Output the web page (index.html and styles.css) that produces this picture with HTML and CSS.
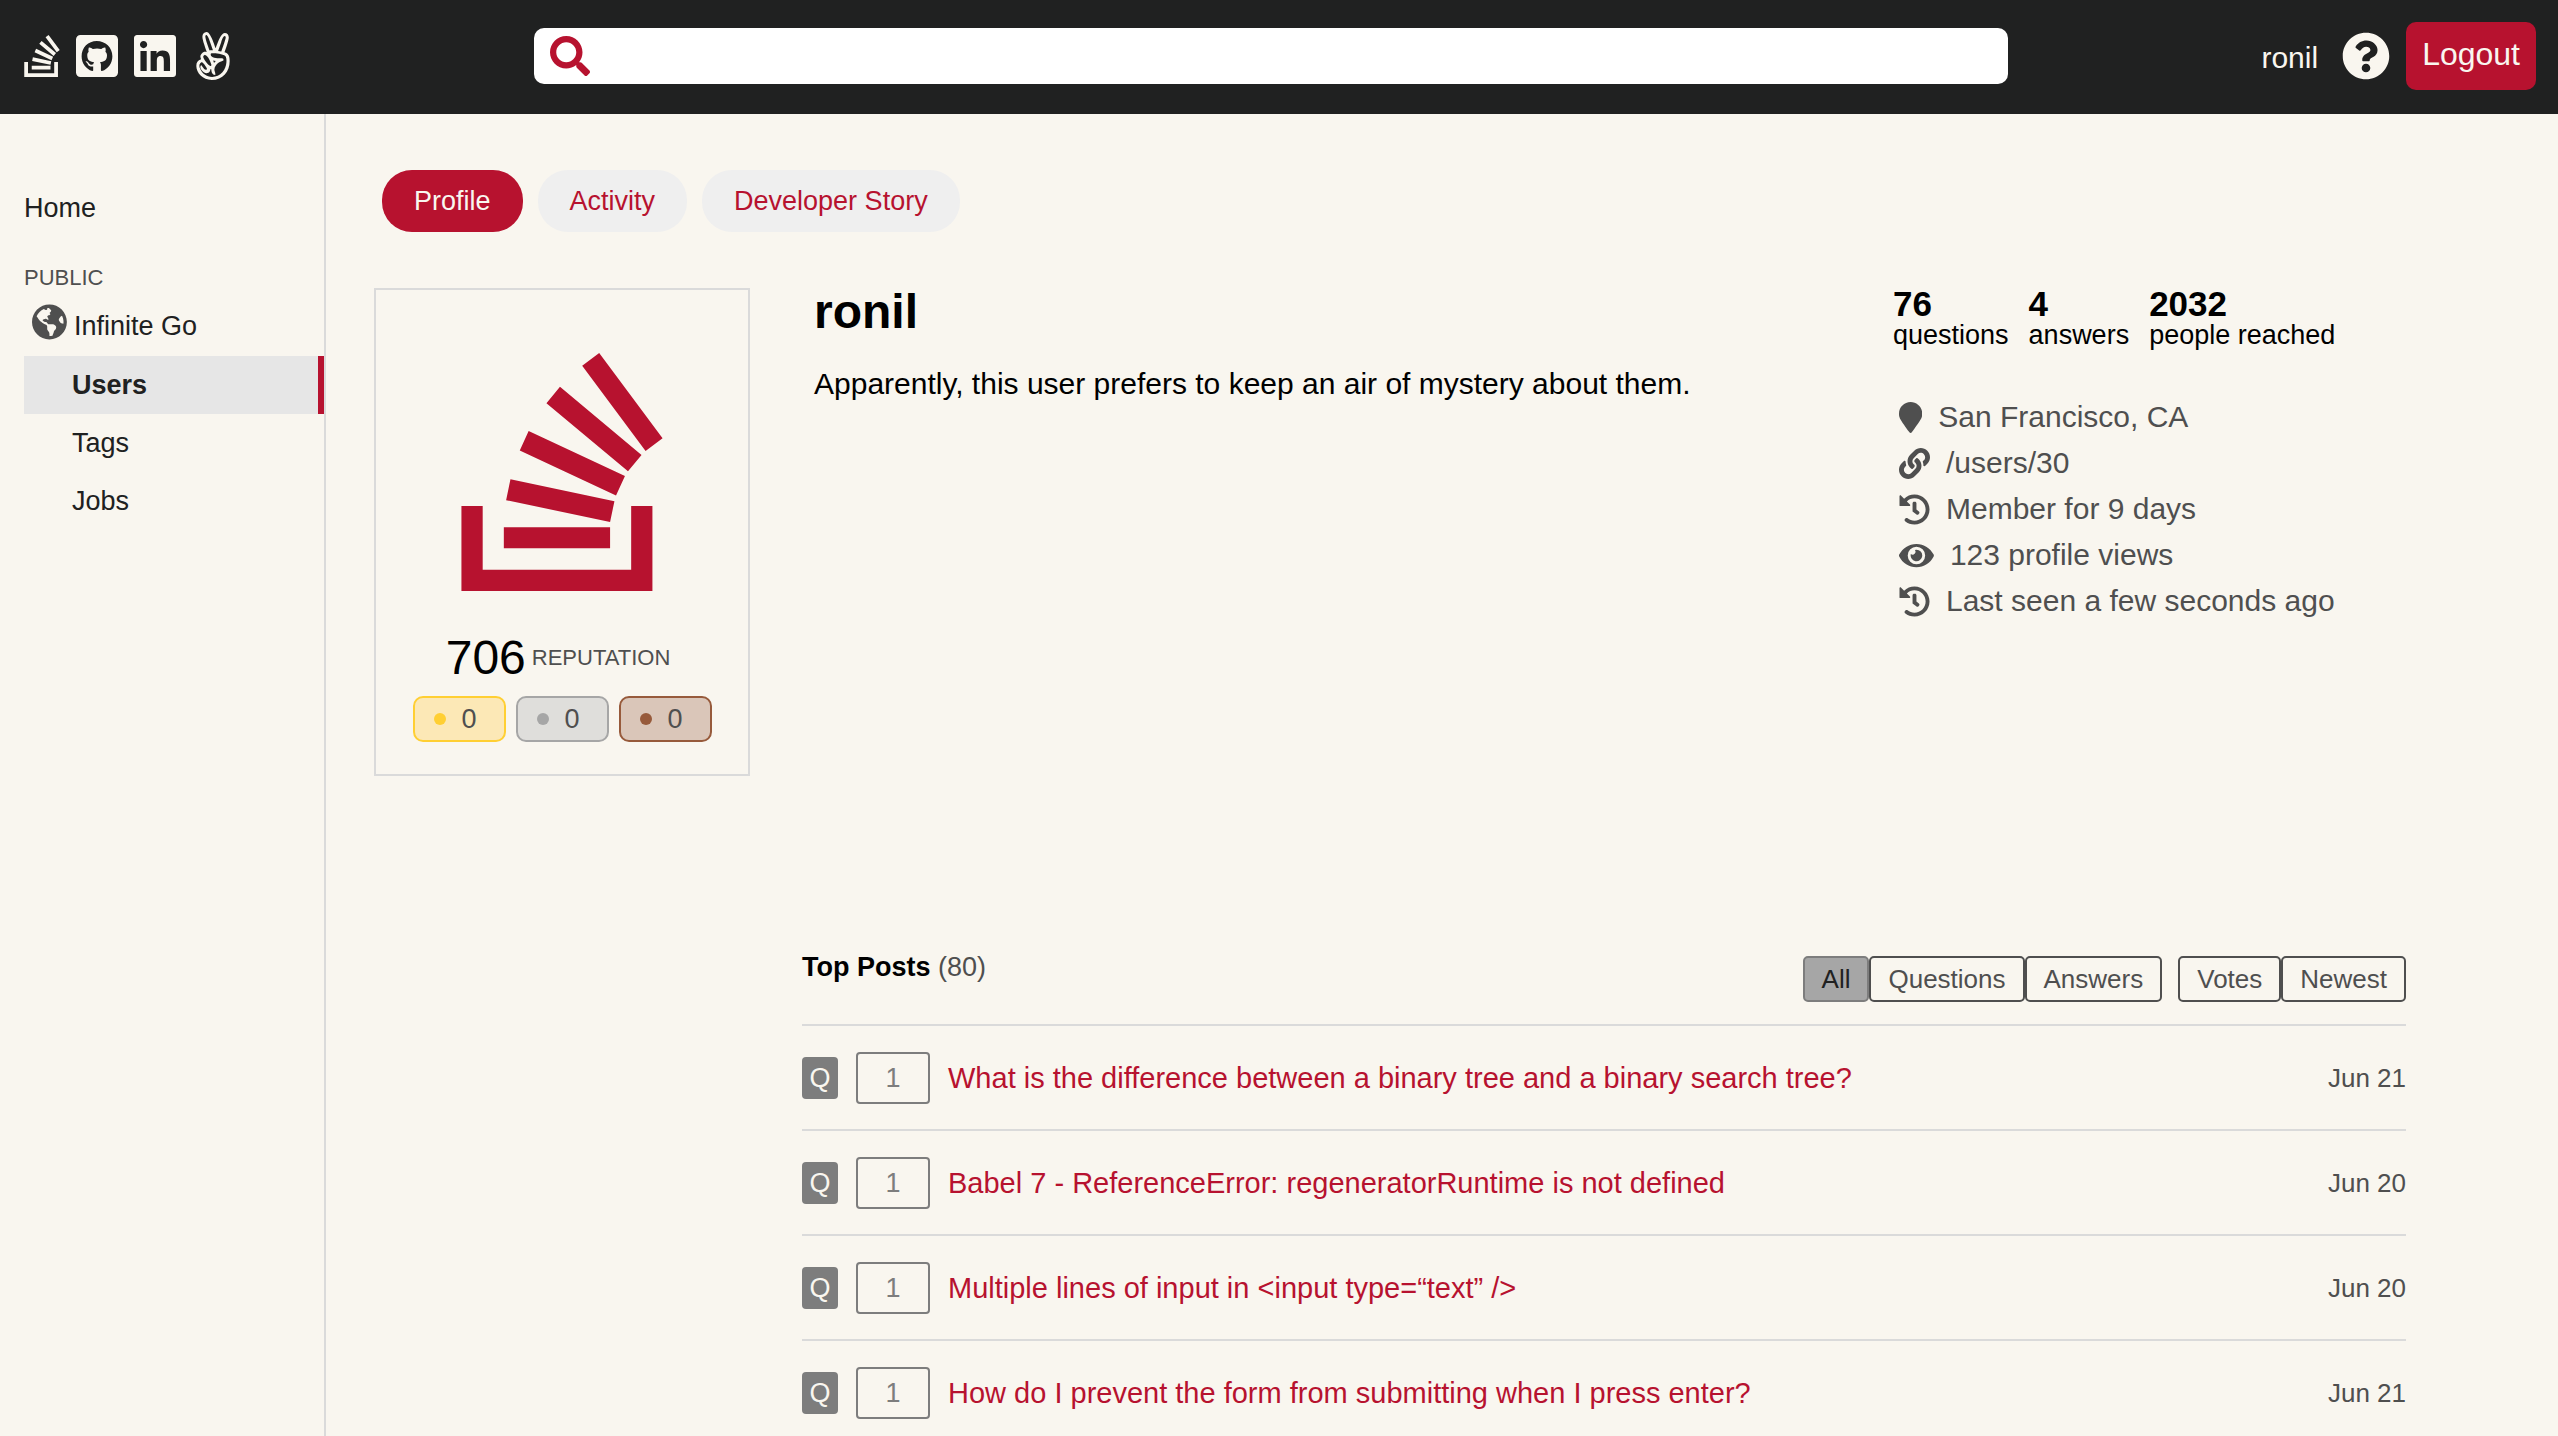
FILE: index.html
```html
<!DOCTYPE html>
<html lang="en">
<head>
<meta charset="utf-8">
<title>ronil - Infinite Go</title>
<link rel="stylesheet" href="styles.css">
</head>
<body>
<header class="topbar">
  <nav class="brand" aria-label="Site links">
    <a href="#" aria-label="Infinite Go"><svg class="icon" viewBox="0 0 384 512"><path d="M290.7 311L95 269.7 86.8 309l195.7 41zm51-87L188.2 95.7l-25.5 30.8 153.5 128.3zm-31.2 39.7L129.2 179l-16.7 36.5L293.7 300zM262 32l-32 24 119.3 160.3 32-24zm20.5 328h-200v39.7h200zm39.7 80H42.7V320h-40v160h359.5V320h-40z"/></svg></a>
    <a href="#" aria-label="GitHub"><svg class="icon" viewBox="0 0 448 512"><path d="M400 32H48C21.5 32 0 53.5 0 80v352c0 26.5 21.5 48 48 48h352c26.5 0 48-21.500 48-48V80c0-26.500-21.500-48-48-48zM277.300 415.700c-8.400 1.500-11.500-3.700-11.500-8 0-5.400.2-33 .2-55.300 0-15.600-5.200-25.500-11.300-30.700 37-4.100 76-9.200 76-73.100 0-18.200-6.500-27.300-17.100-39 1.700-4.300 7.400-22-1.700-45-13.900-4.300-45.700 17.900-45.700 17.900-13.200-3.700-27.500-5.600-41.600-5.600-14.100 0-28.400 1.900-41.600 5.600 0 0-31.800-22.200-45.700-17.900-9.100 22.900-3.500 40.600-1.700 45-10.600 11.700-15.600 20.800-15.600 39 0 63.600 37.300 69 74.300 73.100-4.800 4.300-9.100 11.700-10.600 22.300-9.500 4.300-33.800 11.700-48.300-13.900-9.100-15.800-25.500-17.100-25.500-17.100-16.200-.2-1.100 10.200-1.100 10.200 10.800 5 18.400 24.200 18.400 24.200 9.700 29.700 56.100 19.700 56.100 19.700 0 13.900.2 36.500.2 40.600 0 4.300-3 9.500-11.500 8-66-22.100-112.200-84.900-112.200-158.300 0-91.800 70.200-161.500 162-161.500S388 165.600 388 257.400c.1 73.400-44.700 136.300-110.700 158.300z"/></svg></a>
    <a href="#" aria-label="LinkedIn"><svg class="icon" viewBox="0 0 448 512"><path d="M416 32H31.900C14.300 32 0 46.500 0 64.300v383.400C0 465.500 14.300 480 31.900 480H416c17.600 0 32-14.500 32-32.300V64.300c0-17.800-14.400-32.300-32-32.300zM135.400 416H69V202.200h66.500V416zm-33.200-243c-21.300 0-38.500-17.300-38.500-38.500S80.900 96 102.200 96c21.200 0 38.500 17.300 38.500 38.500 0 21.300-17.200 38.500-38.500 38.500zm282.100 243h-66.400V312c0-24.800-.5-56.700-34.500-56.700-34.600 0-39.900 27-39.900 54.900V416h-66.400V202.200h63.700v29.200h.9c8.900-16.800 30.600-34.500 62.900-34.500 67.200 0 79.700 44.300 79.700 101.900V416z"/></svg></a>
    <a href="#" aria-label="AngelList"><svg class="icon" viewBox="0 0 448 512"><path d="M347.100 215.400c11.700-32.600 45.400-126.900 45.400-157.100 0-26.600-15.700-48.900-43.700-48.900-44.600 0-84.600 131.700-97.100 163.100C242 144 196.600 0 156.600 0c-31.100 0-45.700 22.900-45.700 51.700 0 35.300 34.200 126.800 46.600 162-6.300-2.300-13.100-4.300-20-4.300-23.400 0-48.300 29.100-48.300 52.600 0 8.900 4.900 21.400 8 29.700-36.900 10-51.100 34.600-51.100 71.700C46 435.600 114.400 512 210.600 512c118 0 191.400-88.600 191.400-202.900 0-43.100-6.900-82-54.900-93.700zM311.700 108c4-12.300 21.100-64.300 37.100-64.300 8.600 0 10.900 8.900 10.900 16 0 19.100-38.600 124.600-47.100 148l-34-6 33.100-93.700zM142.300 48.300c0-11.900 14.500-45.700 46.300 47.100l34.600 100.300c-15.600-1.300-27.700-3-35.400 1.400-10.900-28.800-45.500-119.700-45.500-148.800zM140 244c29.300 0 67.100 94.600 67.100 107.400 0 5.100-4.900 11.400-10.600 11.400-20.900 0-76.900-76.900-76.900-97.700.1-7.700 12.700-21.100 20.400-21.100zm184.300 186.300c-29.100 32-66.300 48.600-109.700 48.600-59.400 0-106.300-32.600-128.900-88.300-17.100-43.400 3.800-68.300 20.600-68.300 11.400 0 54.300 60.300 54.300 73.100 0 4.900-7.700 8.300-11.700 8.300-16.100 0-22.400-15.500-51.100-51.400-29.700 29.700 20.500 86.900 58.300 86.900 26.100 0 43.100-24.200 38-42 3.700 0 8.300.3 11.700-.6 1.100 27.100 9.100 59.400 41.700 61.700 0-.9 2-7.100 2-7.400 0-17.400-10.600-32.600-10.600-50.300 0-28.300 21.700-55.700 43.700-71.700 8-6 17.700-9.700 27.100-13.100 9.700-3.700 20-8 27.400-15.400-1.100-11.200-5.700-21.100-16.900-21.100-27.700 0-120.600 4-120.600-39.700 0-6.700.1-13.100 17.400-13.100 32.300 0 114.300 8 138.300 29.100 18.100 16.100 24.300 113.200-31 174.700zm-98.600-126c9.700 3.100 19.700 4 29.700 6-7.400 5.400-14 12-20.300 19.100-2.800-8.500-6.200-16.800-9.400-25.100z"/></svg></a>
  </nav>
  <form class="search" role="search">
    <svg class="search-icon" viewBox="0 0 512 512"><path d="M505 442.700L405.300 343c-4.500-4.500-10.600-7-17-7H372c27.600-35.300 44-79.700 44-128C416 93.100 322.900 0 208 0S0 93.100 0 208s93.100 208 208 208c48.300 0 92.700-16.400 128-44v16.300c0 6.400 2.500 12.500 7 17l99.700 99.700c9.400 9.400 24.600 9.400 33.900 0l28.300-28.300c9.400-9.400 9.400-24.600.1-34zM208 336c-70.700 0-128-57.200-128-128 0-70.700 57.200-128 128-128 70.700 0 128 57.200 128 128 0 70.700-57.200 128-128 128z"/></svg>
    <input class="search-input" type="text" aria-label="Search">
  </form>
  <div class="session">
    <a class="session-user" href="#">ronil</a>
    <a href="#" aria-label="Help"><svg class="icon" viewBox="0 0 512 512"><path d="M504 256c0 136.997-111.043 248-248 248S8 392.997 8 256C8 119.083 119.043 8 256 8s248 111.083 248 248zM262.655 90c-54.497 0-89.255 22.957-116.549 63.758-3.536 5.286-2.353 12.415 2.715 16.258l34.699 26.310c5.205 3.947 12.621 3.008 16.665-2.122 17.864-22.658 30.113-35.797 57.303-35.797 20.429 0 45.698 13.148 45.698 32.958 0 14.976-12.363 22.667-32.534 33.976C247.128 238.528 216 254.941 216 296v4c0 6.627 5.373 12 12 12h56c6.627 0 12-5.373 12-12v-1.333c0-28.462 83.186-29.647 83.186-106.667 0-58.002-60.165-102-116.531-102zM256 338c-25.365 0-46 20.635-46 46 0 25.364 20.635 46 46 46s46-20.636 46-46c0-25.365-20.635-46-46-46z"/></svg></a>
    <button class="logout" type="button">Logout</button>
  </div>
</header>
<div class="layout">
  <nav class="sidebar" aria-label="Main">
    <a class="side-home" href="#">Home</a>
    <p class="side-label">PUBLIC</p>
    <a class="side-site" href="#"><svg class="globe" viewBox="0 0 496 512"><path d="M248 8C111.030 8 0 119.030 0 256s111.030 248 248 248 248-111.030 248-248S384.970 8 248 8zm82.290 357.600c-3.900 3.880-7.990 7.950-11.310 11.280-2.990 3-5.100 6.700-6.170 10.710-1.510 5.660-2.730 11.380-4.770 16.870l-17.390 46.850c-13.760 3-28 4.690-42.650 4.690v-27.380c1.690-12.620-7.640-36.260-22.630-51.250-6-6-9.370-14.140-9.370-22.630v-32.010c0-11.640-6.270-22.340-16.460-27.970-14.370-7.950-34.810-19.060-48.810-26.110-11.480-5.780-22.100-13.140-31.650-21.750l-.8-.72a114.792 114.792 0 0 1-18.060-20.740c-9.380-13.770-24.660-36.420-34.590-51.140 20.470-45.500 57.360-82.040 103.200-101.890l24.010 12.010C203.480 89.740 216 82.010 216 70.110v-11.300c7.990-1.290 16.120-2.110 24.390-2.420l28.300 28.300c6.250 6.250 6.250 16.380 0 22.630L264 112l-10.340 10.340c-3.120 3.120-3.120 8.190 0 11.310l4.690 4.690c3.120 3.120 3.120 8.190 0 11.310l-8 8a8.008 8.008 0 0 1-5.660 2.340h-8.990c-2.080 0-4.080.81-5.580 2.270l-9.920 9.650a8.008 8.008 0 0 0-1.580 9.310l15.590 31.190c2.660 5.320-1.210 11.580-7.150 11.580h-5.640c-1.930 0-3.790-.7-5.240-1.960l-9.280-8.060a16.017 16.017 0 0 0-15.550-3.100l-31.170 10.390a11.950 11.950 0 0 0-8.170 11.340c0 4.530 2.560 8.660 6.610 10.690l11.080 5.540c9.410 4.710 19.790 7.160 30.310 7.160s22.590 27.290 32 32h66.750c8.490 0 16.620 3.370 22.630 9.370l13.690 13.690a30.503 30.503 0 0 1 8.930 21.570 46.536 46.536 0 0 1-13.720 32.980zM417 274.250c-5.790-1.450-10.840-5-14.150-9.970l-17.980-26.970a23.970 23.970 0 0 1 0-26.620l19.590-29.380c2.320-3.470 5.500-6.290 9.240-8.150l12.980-6.490C440.200 193.590 448 223.870 448 256c0 8.670-.74 17.160-1.820 25.540L417 274.250z"/></svg>Infinite Go</a>
    <a class="side-item side-item-active" href="#">Users</a>
    <a class="side-item" href="#">Tags</a>
    <a class="side-item" href="#">Jobs</a>
  </nav>
  <main class="content">
    <div class="tabs">
      <button class="tab tab-active" type="button">Profile</button>
      <button class="tab" type="button">Activity</button>
      <button class="tab" type="button">Developer Story</button>
    </div>
    <section class="profile">
      <div class="card">
        <svg class="avatar" viewBox="0 0 384 512"><path d="M290.700 311L95 269.700 86.800 309l195.700 41zm51-87L188.200 95.700l-25.500 30.800 153.500 128.300zm-31.200 39.700L129.200 179l-16.700 36.500L293.700 300zM262 32l-32 24 119.300 160.300 32-24zm20.500 328h-200v39.700h200zm39.700 80H42.700V320h-40v160h359.500V320h-40z"/></svg>
        <p class="reputation"><span class="reputation-count">706</span><span class="reputation-label">REPUTATION</span></p>
        <div class="badges">
          <span class="badge badge-gold">0</span>
          <span class="badge badge-silver">0</span>
          <span class="badge badge-bronze">0</span>
        </div>
      </div>
      <div class="about">
        <h1 class="name">ronil</h1>
        <p class="bio">Apparently, this user prefers to keep an air of mystery about them.</p>
      </div>
      <div class="facts">
        <dl class="stats">
          <div><dd>76</dd><dt>questions</dt></div>
          <div><dd>4</dd><dt>answers</dt></div>
          <div><dd>2032</dd><dt>people reached</dt></div>
        </dl>
        <ul class="details">
          <li><svg viewBox="0 0 384 512"><path d="M172.268 501.670C26.970 291.031 0 269.413 0 192 0 85.961 85.961 0 192 0s192 85.961 192 192c0 77.413-26.970 99.031-172.268 309.670-9.535 13.774-29.930 13.773-39.464 0z"/></svg>San Francisco, CA</li>
          <li><svg viewBox="0 0 512 512"><path d="M326.612 185.391c59.747 59.809 58.927 155.698.36 214.590-.11.12-.24.25-.36.37l-67.200 67.200c-59.270 59.270-155.699 59.262-214.960 0-59.270-59.260-59.270-155.700 0-214.960l37.106-37.106c9.840-9.840 26.786-3.300 27.294 10.606.648 17.722 3.826 35.527 9.690 52.721 1.986 5.822.567 12.262-3.783 16.612l-13.087 13.087c-28.026 28.026-28.905 73.660-1.155 101.960 28.024 28.579 74.086 28.749 102.325.51l67.200-67.190c28.191-28.191 28.073-73.757 0-101.830-3.701-3.694-7.429-6.564-10.341-8.569a16.037 16.037 0 0 1-6.947-12.606c-.396-10.567 3.348-21.456 11.698-29.806l21.054-21.055c5.521-5.521 14.182-6.199 20.584-1.731a152.482 152.482 0 0 1 20.522 17.197zM467.547 44.449c-59.261-59.262-155.690-59.270-214.960 0l-67.200 67.200c-.12.12-.25.25-.36.37-58.566 58.892-59.387 154.781.36 214.590a152.454 152.454 0 0 0 20.521 17.196c6.402 4.468 15.064 3.789 20.584-1.731l21.054-21.055c8.350-8.350 12.094-19.239 11.698-29.806a16.037 16.037 0 0 0-6.947-12.606c-2.912-2.005-6.640-4.875-10.341-8.569-28.073-28.073-28.191-73.639 0-101.830l67.200-67.190c28.239-28.239 74.300-28.069 102.325.51 27.750 28.300 26.872 73.934-1.155 101.960l-13.087 13.087c-4.350 4.350-5.769 10.790-3.783 16.612 5.864 17.194 9.042 34.999 9.690 52.721.509 13.906 17.454 20.446 27.294 10.606l37.106-37.106c59.271-59.259 59.271-155.699.001-214.959z"/></svg><a href="#">/users/30</a></li>
          <li><svg viewBox="0 0 512 512"><path d="M504 255.531c.253 136.640-111.180 248.372-247.820 248.468-59.015.042-113.223-20.530-155.822-54.911-11.077-8.940-11.905-25.541-1.839-35.607l11.267-11.267c8.609-8.609 22.353-9.551 31.891-1.984C173.062 425.135 212.781 440 256 440c101.705 0 184-82.311 184-184 0-101.705-82.311-184-184-184-48.814 0-93.149 18.969-126.068 49.932l50.754 50.754c10.080 10.080 2.941 27.314-11.313 27.314H24c-8.837 0-16-7.163-16-16V38.627c0-14.254 17.234-21.393 27.314-11.314l49.372 49.372C129.209 34.136 189.552 8 256 8c136.810 0 247.747 110.780 248 247.531zm-180.912 78.784l9.823-12.630c8.138-10.463 6.253-25.542-4.210-33.679L288 256.349V152c0-13.255-10.745-24-24-24h-16c-13.255 0-24 10.745-24 24v135.651l65.409 50.874c10.463 8.137 25.541 6.253 33.679-4.210z"/></svg>Member for 9 days</li>
          <li><svg viewBox="0 0 576 512"><path d="M572.520 241.400C518.290 135.590 410.930 64 288 64S57.680 135.640 3.480 241.410a32.350 32.350 0 0 0 0 29.190C57.710 376.410 165.070 448 288 448s230.320-71.640 284.520-177.410a32.350 32.350 0 0 0 0-29.190zM288 400a144 144 0 1 1 144-144 143.930 143.930 0 0 1-144 144zm0-240a95.310 95.310 0 0 0-25.310 3.790 47.850 47.850 0 0 1-66.900 66.900A95.780 95.780 0 1 0 288 160z"/></svg>123 profile views</li>
          <li><svg viewBox="0 0 512 512"><path d="M504 255.531c.253 136.640-111.180 248.372-247.820 248.468-59.015.042-113.223-20.530-155.822-54.911-11.077-8.940-11.905-25.541-1.839-35.607l11.267-11.267c8.609-8.609 22.353-9.551 31.891-1.984C173.062 425.135 212.781 440 256 440c101.705 0 184-82.311 184-184 0-101.705-82.311-184-184-184-48.814 0-93.149 18.969-126.068 49.932l50.754 50.754c10.080 10.080 2.941 27.314-11.313 27.314H24c-8.837 0-16-7.163-16-16V38.627c0-14.254 17.234-21.393 27.314-11.314l49.372 49.372C129.209 34.136 189.552 8 256 8c136.810 0 247.747 110.780 248 247.531zm-180.912 78.784l9.823-12.630c8.138-10.463 6.253-25.542-4.210-33.679L288 256.349V152c0-13.255-10.745-24-24-24h-16c-13.255 0-24 10.745-24 24v135.651l65.409 50.874c10.463 8.137 25.541 6.253 33.679-4.210z"/></svg>Last seen a few seconds ago</li>
        </ul>
      </div>
    </section>
    <section class="posts">
      <div class="posts-head">
        <h2 class="posts-title">Top Posts <span class="posts-count">(80)</span></h2>
        <div class="filters">
          <div class="filter-group">
            <button class="filter filter-active" type="button">All</button>
            <button class="filter" type="button">Questions</button>
            <button class="filter" type="button">Answers</button>
          </div>
          <div class="filter-group">
            <button class="filter" type="button">Votes</button>
            <button class="filter" type="button">Newest</button>
          </div>
        </div>
      </div>
      <ul class="post-list">
        <li class="post"><span class="post-kind">Q</span><span class="post-score">1</span><a class="post-link" href="#">What is the difference between a binary tree and a binary search tree?</a><time class="post-date">Jun 21</time></li>
        <li class="post"><span class="post-kind">Q</span><span class="post-score">1</span><a class="post-link" href="#">Babel 7 - ReferenceError: regeneratorRuntime is not defined</a><time class="post-date">Jun 20</time></li>
        <li class="post"><span class="post-kind">Q</span><span class="post-score">1</span><a class="post-link" href="#">Multiple lines of input in &lt;input type=“text” /&gt;</a><time class="post-date">Jun 20</time></li>
        <li class="post"><span class="post-kind">Q</span><span class="post-score">1</span><a class="post-link" href="#">How do I prevent the form from submitting when I press enter?</a><time class="post-date">Jun 21</time></li>
      </ul>
    </section>
  </main>
</div>
</body>
</html>
```
FILE: styles.css
```css
:root {
  --cream: #f9f6ef;
  --ink: #202121;
  --red: #b7122f;
  --grey: #4f4f4f;
  --mid: #7d7d7d;
  --line: #dadada;
}

* {
  box-sizing: border-box;
}

body {
  display: flex;
  flex-direction: column;
  min-height: 100vh;
  margin: 0;
  background: var(--cream);
  color: #000;
  font-family: "Liberation Sans", Arial, sans-serif;
  font-size: 27px;
  line-height: 32px;
}

a {
  color: inherit;
  text-decoration: none;
}

button {
  font: inherit;
  cursor: pointer;
}

h1, h2, p, ul, dl, dd {
  margin: 0;
  padding: 0;
}

ul {
  list-style: none;
}

svg {
  display: block;
  fill: currentColor;
}

/* Top bar */
.topbar {
  display: flex;
  align-items: center;
  height: 114px;
  padding: 0 22px 2px 24px;
  background: var(--ink);
  color: var(--cream);
}

.brand {
  display: flex;
  flex: 0 0 510px;
  gap: 16px;
}

.icon {
  height: 48px;
}

.search {
  display: flex;
  flex: 1;
  align-items: center;
  height: 56px;
  padding: 0 16px;
  gap: 12px;
  border-radius: 10px;
  background: #fff;
}

.search-icon {
  flex: none;
  width: 40px;
  height: 40px;
  color: var(--red);
}

.search-input {
  flex: 1;
  min-width: 0;
  border: 0;
  outline: 0;
  background: none;
  font: inherit;
}

.session {
  display: flex;
  flex: 0 0 528px;
  align-items: center;
  justify-content: flex-end;
}

.session-user {
  margin-right: 24px;
  padding-top: 4px;
  font-size: 30px;
}

.logout {
  height: 68px;
  margin-left: 16px;
  padding: 0 16px 4px;
  border: 0;
  border-radius: 10px;
  background: var(--red);
  color: var(--cream);
  font-size: 32px;
}

/* Page columns */
.layout {
  display: flex;
  flex: 1;
}

.sidebar {
  display: flex;
  flex: 0 0 326px;
  flex-direction: column;
  padding: 78px 0 0 24px;
  border-right: 2px solid var(--line);
  color: var(--ink);
}

.side-home {
  margin-bottom: 38px;
}

.side-label {
  color: var(--grey);
  font-size: 22px;
}

.side-site {
  display: flex;
  align-items: flex-start;
  gap: 7px;
  height: 62px;
  padding: 10px 0 0 8px;
  line-height: 44px;
}

.globe {
  height: 36px;
  color: var(--grey);
}

.side-item {
  padding: 13px 0 13px 48px;
}

.side-item-active {
  border-right: 6px solid var(--red);
  background: #e6e6e6;
  font-weight: bold;
}

.content {
  flex: 1;
  min-width: 0;
  padding: 56px 152px 0 48px;
}

.tabs {
  display: flex;
  gap: 15px;
  margin: 0 0 56px 8px;
}

.tab {
  height: 62px;
  padding: 0 32px;
  border: 0;
  border-radius: 30px;
  background: #efefef;
  color: var(--red);
}

.tab-active {
  background: var(--red);
  color: var(--cream);
}

/* Profile */
.profile {
  display: flex;
  align-items: flex-start;
}

.card {
  display: flex;
  flex: 0 0 376px;
  flex-direction: column;
  align-items: center;
  padding: 46px 0 32px;
  border: 2px solid var(--line);
}

.avatar {
  height: 272px;
  color: var(--red);
}

.reputation {
  display: flex;
  align-items: center;
  gap: 6px;
  height: 88px;
  padding: 12px 8px 0 0;
}

.reputation-count {
  font-size: 48px;
}

.reputation-label {
  color: var(--grey);
  font-size: 22px;
}

.badges {
  display: flex;
  gap: 10px;
}

.badge {
  display: flex;
  align-items: center;
  gap: 16px;
  width: 93px;
  height: 46px;
  padding-left: 19px;
  border: 2px solid;
  border-radius: 10px;
  color: var(--grey);
}

.badge::before {
  content: "";
  width: 12px;
  height: 12px;
  border-radius: 50%;
}

.badge-gold {
  border-color: #ffcf33;
  background: #fce8b6;
}

.badge-gold::before {
  background: #ffcf33;
}

.badge-silver {
  border-color: #a6a6a6;
  background: #dfdedb;
}

.badge-silver::before {
  background: #a6a6a6;
}

.badge-bronze {
  border-color: #975a3b;
  background: #dac6b9;
}

.badge-bronze::before {
  background: #975a3b;
}

.about {
  flex: 1;
  padding-left: 64px;
}

.name {
  font-size: 48px;
  line-height: 48px;
}

.bio {
  margin-top: 32px;
  font-size: 30px;
}

.facts {
  flex: 0 0 513px;
}

.stats {
  display: flex;
  gap: 20px;
}

.stats dd {
  font-size: 35px;
  font-weight: bold;
}

.stats dt {
  line-height: 30px;
}

.stats div {
  display: flex;
  flex-direction: column;
}

.details {
  margin-top: 44px;
  padding-left: 6px;
  color: var(--grey);
  font-size: 30px;
}

.details li {
  display: flex;
  align-items: center;
  gap: 16px;
  height: 46px;
}

.details svg {
  height: 31px;
}

/* Posts */
.posts {
  margin: 180px 0 0 428px;
}

.posts-head {
  display: flex;
  justify-content: space-between;
  align-items: flex-start;
  padding-bottom: 22px;
}

.posts-title {
  font-size: 27px;
  line-height: 22px;
}

.posts-count {
  color: var(--grey);
  font-weight: normal;
}

.filters {
  display: flex;
  gap: 16px;
}

.filter-group {
  display: flex;
}

.filter {
  height: 46px;
  padding: 0 17px;
  border: 2px solid var(--grey);
  border-radius: 5px;
  background: none;
  color: var(--grey);
  font-size: 26px;
}

.filter-active {
  border-color: var(--mid);
  background: #a6a6a6;
  color: var(--ink);
}

.post {
  display: flex;
  align-items: center;
  padding: 26px 0 25px;
  border-top: 2px solid var(--line);
}

.post-kind {
  width: 36px;
  margin-right: 18px;
  border-radius: 4px;
  background: var(--mid);
  color: var(--cream);
  line-height: 42px;
  text-align: center;
}

.post-score {
  width: 74px;
  margin-right: 18px;
  border: 2px solid var(--mid);
  border-radius: 4px;
  color: var(--mid);
  line-height: 48px;
  text-align: center;
}

.post-link {
  flex: 1;
  color: var(--red);
  font-size: 29px;
}

.post-date {
  color: var(--grey);
  font-size: 26px;
}
```
